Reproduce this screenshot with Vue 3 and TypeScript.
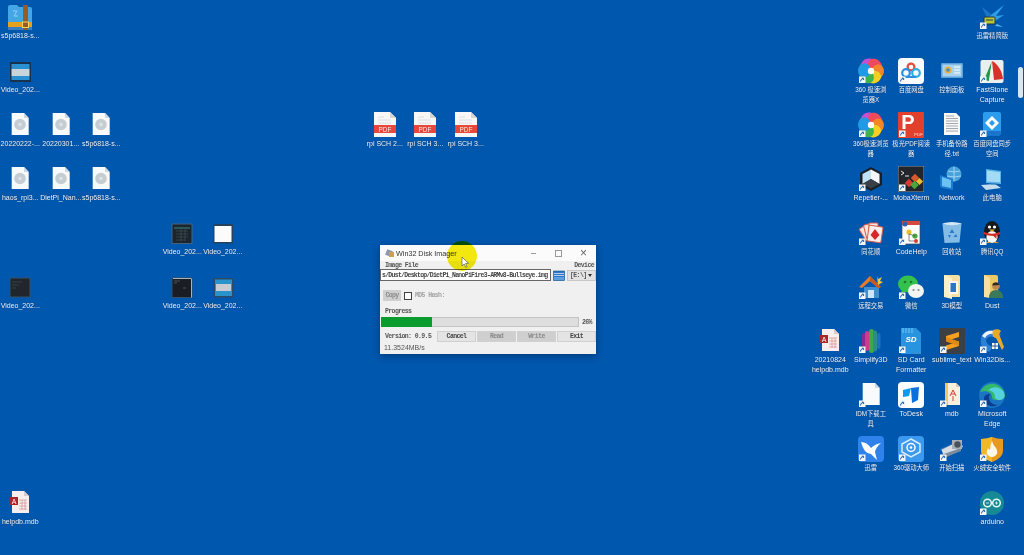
<script setup lang="ts">
interface DesktopIcon {
  col: number
  row: number
  kind: string
  label: string
  link?: boolean
}

const icons: DesktopIcon[] = [
  { col: 1, row: 1, kind: 'zip', label: 's5p6818-s...' },
  { col: 1, row: 2, kind: 'vstrip', label: 'Video_202...' },
  { col: 1, row: 3, kind: 'file', label: '20220222-...' },
  { col: 2, row: 3, kind: 'file', label: '20220301...' },
  { col: 3, row: 3, kind: 'file', label: 's5p6818-s...' },
  { col: 1, row: 4, kind: 'file', label: 'haos_rpi3...' },
  { col: 2, row: 4, kind: 'file', label: 'DietPi_Nan...' },
  { col: 3, row: 4, kind: 'file', label: 's5p6818-s...' },
  { col: 5, row: 5, kind: 'vgrid', label: 'Video_202...' },
  { col: 6, row: 5, kind: 'vwhite', label: 'Video_202...' },
  { col: 1, row: 6, kind: 'vdark', label: 'Video_202...' },
  { col: 5, row: 6, kind: 'vterm', label: 'Video_202...' },
  { col: 6, row: 6, kind: 'vblue', label: 'Video_202...' },
  { col: 10, row: 3, kind: 'pdf', label: 'rpi SCH 2...' },
  { col: 11, row: 3, kind: 'pdf', label: 'rpi SCH 3...' },
  { col: 12, row: 3, kind: 'pdf', label: 'rpi SCH 3...' },
  { col: 1, row: 10, kind: 'access', label: 'helpdb.mdb' },

  { col: 25, row: 1, kind: 'bird', label: '迅雷精简版', link: true },
  { col: 22, row: 2, kind: 'rainbow', label: '360 极速浏\n览器X', link: true },
  { col: 23, row: 2, kind: 'baidu', label: '百度网盘', link: true },
  { col: 24, row: 2, kind: 'panel', label: '控制面板' },
  { col: 25, row: 2, kind: 'faststone', label: 'FastStone\nCapture', link: true },
  { col: 22, row: 3, kind: 'rainbow', label: '360极速浏览\n器', link: true },
  { col: 23, row: 3, kind: 'foxit', label: '极光PDF阅读\n器', link: true },
  { col: 24, row: 3, kind: 'txt', label: '手机备份路\n径.txt' },
  { col: 25, row: 3, kind: 'sync', label: '百度网盘同步\n空间', link: true },
  { col: 22, row: 4, kind: 'repetier', label: 'Repetier-...', link: true },
  { col: 23, row: 4, kind: 'moba', label: 'MobaXterm', link: true },
  { col: 24, row: 4, kind: 'network', label: 'Network' },
  { col: 25, row: 4, kind: 'pc', label: '此电脑' },
  { col: 22, row: 5, kind: 'cards', label: '同花顺', link: true },
  { col: 23, row: 5, kind: 'codehelp', label: 'CodeHelp', link: true },
  { col: 24, row: 5, kind: 'recycle', label: '回收站' },
  { col: 25, row: 5, kind: 'qq', label: '腾讯QQ', link: true },
  { col: 22, row: 6, kind: 'house', label: '远程交易', link: true },
  { col: 23, row: 6, kind: 'wechat', label: '微信', link: true },
  { col: 24, row: 6, kind: 'folder3d', label: '3D模型' },
  { col: 25, row: 6, kind: 'userfolder', label: 'Dust' },
  { col: 21, row: 7, kind: 'access', label: '20210824\nhelpdb.mdb' },
  { col: 22, row: 7, kind: 'simplify', label: 'Simplify3D', link: true },
  { col: 23, row: 7, kind: 'sd', label: 'SD Card\nFormatter', link: true },
  { col: 24, row: 7, kind: 'sublime', label: 'sublime_text', link: true },
  { col: 25, row: 7, kind: 'disk', label: 'Win32Dis...', link: true },
  { col: 22, row: 8, kind: 'blank', label: 'IDM下载工\n具', link: true },
  { col: 23, row: 8, kind: 'todesk', label: 'ToDesk', link: true },
  { col: 24, row: 8, kind: 'mdb', label: 'mdb', link: true },
  { col: 25, row: 8, kind: 'edge', label: 'Microsoft\nEdge', link: true },
  { col: 22, row: 9, kind: 'xunlei', label: '迅雷', link: true },
  { col: 23, row: 9, kind: 'driver', label: '360驱动大师', link: true },
  { col: 24, row: 9, kind: 'scanner', label: '开始扫描', link: true },
  { col: 25, row: 9, kind: 'huorong', label: '火绒安全软件', link: true },
  { col: 25, row: 10, kind: 'arduino', label: 'arduino', link: true },
]

// petals of the 360 browser logo, clockwise from the top left
const petals = ['#c94fd0', '#ef4a5c', '#f4862a', '#f6cf22', '#3cb54a', '#1f9be6']

const hasCjk = (text: string) => /[\u4e00-\u9fff]/.test(text)

const imagePath = 's/Dust/Desktop/DietPi_NanoPiFire3-ARMv8-Bullseye.img'
const progress = 26
</script>

<template>
  <div class="desktop">
    <div class="grid">
      <div
        v-for="d in icons"
        :key="`${d.col}-${d.row}`"
        class="item"
        :style="{ gridColumn: d.col, gridRow: d.row }"
      >
        <svg class="art" viewBox="0 0 26 26" width="26" height="26">
          <g v-if="d.kind === 'zip'">
            <path d="M1 3q0-2 2-2h7l2 2h11q2 0 2 2v19q0 2-2 2H3q-2 0-2-2z" fill="#45a6e6" />
            <rect x="1" y="18" width="24" height="5" fill="#e6a21e" />
            <rect x="1" y="23" width="24" height="3" fill="#3b7fc0" />
            <rect x="16" y="1" width="5" height="25" fill="#9a5a24" />
            <rect x="15.5" y="18" width="6" height="5.5" fill="none" stroke="#f6d66a" />
            <path d="M6 7l4 0-3 5h4" fill="none" stroke="#8fd0f5" />
          </g>
          <g v-else-if="d.kind === 'vstrip'">
            <rect x="3" y="4" width="21" height="20" fill="#18324e" />
            <rect x="4.5" y="6" width="18" height="5" fill="#2b90d2" />
            <rect x="4.5" y="11" width="18" height="7" fill="#c9d3da" />
            <rect x="4.5" y="18" width="18" height="4" fill="#2b90d2" />
          </g>
          <g v-else-if="d.kind === 'file' || d.kind === 'blank'">
            <path d="M4.7 1H17l4.7 5v17H4.7z" fill="#f8fafc" />
            <path d="M17 1v5h4.7z" fill="#cfd8e2" />
            <g v-if="d.kind === 'file'">
              <circle cx="13" cy="12.5" r="5.8" fill="#c6cdd2" />
              <circle cx="13" cy="12.5" r="1.8" fill="#dde2e5" />
            </g>
          </g>
          <g v-else-if="d.kind === 'pdf'">
            <path d="M2 0H18l6 6V25H2z" fill="#f7f7f7" />
            <path d="M18 0v6h6z" fill="#d5d5d5" />
            <path d="M6 5h6M6 8h13M6 11h13" stroke="#dedede" />
            <rect x="2" y="13" width="22" height="8" fill="#e7483a" />
            <text x="13" y="19.6" class="t" font-size="6.4" fill="#fbe8e4" text-anchor="middle">PDF</text>
          </g>
          <g v-else-if="d.kind === 'vgrid'">
            <rect x="3" y="4" width="20" height="19.5" fill="#1c252c" stroke="#47627c" />
            <path d="M5 8h16" stroke="#3c8b86" />
            <path d="M7 11h12M7 14h12M7 17h12M7 20h9M12 9v12M16 9v12" stroke="#46535c" stroke-width=".6" />
          </g>
          <g v-else-if="d.kind === 'vwhite'">
            <rect x="3" y="4" width="20" height="19.5" fill="#27425c" />
            <rect x="4.5" y="6" width="17" height="16" fill="#fbfbfb" />
          </g>
          <g v-else-if="d.kind === 'vterm'">
            <rect x="3" y="4" width="20" height="19.5" fill="#1a1e24" stroke="#35506c" />
            <path d="M22.5 4.5v19M4 4.5h18" stroke="#e6e8ea" stroke-width=".7" />
            <path d="M5 7h6M5 9h3M14 14h3" stroke="#6c7480" stroke-width=".6" />
          </g>
          <g v-else-if="d.kind === 'vblue'">
            <rect x="3" y="4" width="20" height="19.5" fill="#2a4a68" />
            <rect x="5" y="5.5" width="17" height="16.5" fill="#2a93cc" />
            <rect x="6" y="10" width="15" height="7" fill="#c9ccd0" />
          </g>
          <g v-else-if="d.kind === 'vdark'">
            <rect x="3" y="4" width="20" height="19" fill="#20262c" stroke="#35506c" />
            <path d="M5 8h10M5 11h7M5 14h4" stroke="#48505a" stroke-width=".6" />
          </g>
          <g v-else-if="d.kind === 'access'">
            <path d="M5 1H17l5 5V23H5z" fill="#f9eeee" />
            <path d="M17 1v5h5z" fill="#d9c9c9" />
            <path d="M12 10h8M12 13h8M12 16h8M12 19h8M15 10v10M18 10v10" stroke="#cf8c8c" stroke-width=".7" />
            <rect x="3" y="7" width="8" height="8" fill="#a8262a" />
            <text x="7" y="13.8" class="t" font-size="7" fill="#fff" text-anchor="middle">A</text>
          </g>
          <g v-else-if="d.kind === 'mdb'">
            <path d="M6 1H17l4 4V23H6z" fill="#f9f1de" />
            <path d="M6 1h3v22H6z" fill="#efc765" />
            <path d="M17 1v4h4z" fill="#d9cdb4" />
            <path d="M11 14l3-6 3 6M12 12h4M14 14v5" fill="none" stroke="#c9423c" />
          </g>
          <g v-else-if="d.kind === 'bird'">
            <path d="M8 14L25 1 17 12l8-1-9 6z" fill="#2f9de6" />
            <path d="M8 14L3 3l9 7z" fill="#1c75c4" />
            <path d="M18 20l6 3-8-1z" fill="#58b7ee" />
            <rect x="5" y="13" width="11" height="7" rx="1" fill="#b8c83a" stroke="#27343a" />
            <path d="M7 16h7" stroke="#27343a" />
          </g>
          <g v-else-if="d.kind === 'rainbow'">
            <circle cx="13" cy="13" r="12" fill="#e8843a" />
            <path
              v-for="(color, i) in petals"
              :key="color"
              d="M13 13C5 15 0 8 5 3c4-4 12-3 12 3 0 3-2 5-4 7z"
              :fill="color"
              :transform="`rotate(${i * 60} 13 13)`"
            />
            <circle cx="13" cy="13" r="3.2" fill="#fff" />
          </g>
          <g v-else-if="d.kind === 'baidu'">
            <rect width="26" height="26" rx="4" fill="#f8fbff" />
            <circle cx="13" cy="9" r="3.4" fill="none" stroke="#e64a3a" stroke-width="2.2" />
            <circle cx="8" cy="15" r="3.8" fill="none" stroke="#2b90e0" stroke-width="2.2" />
            <circle cx="18" cy="15" r="3.8" fill="none" stroke="#2bb0e6" stroke-width="2.2" />
            <path d="M8 19h10" stroke="#2b90e0" stroke-width="2" />
          </g>
          <g v-else-if="d.kind === 'panel'">
            <rect x="2" y="5" width="22" height="15" rx="1" fill="#5aa2d8" />
            <rect x="3.5" y="6.5" width="19" height="12" fill="#a9d2ee" />
            <circle cx="9" cy="12" r="3.6" fill="#e8b23a" />
            <circle cx="9" cy="12" r="1.8" fill="#3f8fd0" />
            <path d="M15 9h6M15 12h6M15 15h6" stroke="#fff" />
          </g>
          <g v-else-if="d.kind === 'faststone'">
            <rect x="1.5" y="2" width="23" height="23" rx="2" fill="#e9eeee" />
            <path d="M13 3L5 22l5 1z" fill="#1f9a46" />
            <path d="M13 3l-3 20 5-1z" fill="#f3f3ee" />
            <path d="M13 3l2 19 9-1c-1-8-5-15-11-18z" fill="#d8312a" />
          </g>
          <g v-else-if="d.kind === 'foxit'">
            <rect width="26" height="26" rx="1" fill="#e0402c" />
            <text x="10" y="17" class="t" font-size="20" font-weight="700" fill="#fff" text-anchor="middle">P</text>
            <text x="20.5" y="23.5" class="t" font-size="4.4" fill="#ffd9d0" text-anchor="middle">PDF</text>
          </g>
          <g v-else-if="d.kind === 'txt'">
            <path d="M5 1H17l4 4V23H5z" fill="#f8f8f8" />
            <path d="M7 4h8M7 6.5h12M7 9h12M7 11.5h12M7 14h12M7 16.5h12M7 19h12" stroke="#8d939a" stroke-width=".8" />
          </g>
          <g v-else-if="d.kind === 'sync'">
            <path d="M6 0h14a2 2 0 0 1 2 2V20q0 4-4 4H8q-4 0-4-4V2a2 2 0 0 1 2-2z" fill="#2c9cec" />
            <path d="M4 19q0 5 4 5h10q4 0 4-5z" fill="#1a74cc" />
            <path d="M13 4l7 7-7 7-7-7z" fill="#fff" />
            <path d="M13 8l3 3-3 3-3-3z" fill="#2c9cec" />
          </g>
          <g v-else-if="d.kind === 'repetier'">
            <path d="M13 1l11 6v12l-11 6-11-6V7z" fill="#1b1f26" />
            <path d="M13 3.5l8.5 4.5v10l-8.5-5z" fill="#f4f6f8" />
            <path d="M13 3.5L4.5 8v10l8.5-5z" fill="#bfe2f4" />
            <path d="M4.5 18L13 13l8.5 5L13 22.5z" fill="#3a3f48" />
          </g>
          <g v-else-if="d.kind === 'moba'">
            <rect width="26" height="26" fill="#22262c" stroke="#8a9aa8" />
            <path d="M3 5l3 2-3 2M7 10h4" stroke="#e6e6e6" fill="none" />
            <rect x="8" y="14" width="6" height="6" fill="#d83a30" transform="rotate(45 11 17)" />
            <rect x="14" y="9" width="6" height="6" fill="#d85a2c" transform="rotate(45 17 12)" />
            <rect x="13.5" y="16" width="6" height="6" fill="#4aa63c" transform="rotate(45 16.5 19)" />
            <rect x="19" y="13" width="5" height="5" fill="#e8c030" transform="rotate(45 21.5 15.5)" />
          </g>
          <g v-else-if="d.kind === 'network'">
            <circle cx="15" cy="8" r="7.5" fill="#48a2dc" />
            <path d="M9 5q6 2 12 0M8 10q7 2 14 0M15 .5v15" stroke="#c7e6f6" stroke-width=".7" fill="none" />
            <path d="M1 9l13 4v11l-11-2q-2-1-2-2z" fill="#1c7dd0" />
            <path d="M3 11l9 3v8l-9-2z" fill="#6cc2f0" />
          </g>
          <g v-else-if="d.kind === 'pc'">
            <path d="M7 3l15 2v13L7 17z" fill="#5cb3e6" />
            <path d="M8 4.5l13 1.8v10L8 15.5z" fill="#a3daf4" />
            <path d="M2 19l14-1 6 4-15 2z" fill="#c5dcec" />
            <path d="M12 17l5 .7v1l-5-.2z" fill="#3282c4" />
          </g>
          <g v-else-if="d.kind === 'cards'">
            <rect x="4" y="6" width="8" height="14" rx="1" fill="#f6e4e0" stroke="#d65a50" transform="rotate(-32 8 13)" />
            <rect x="7" y="4" width="8" height="14" rx="1" fill="#f6e4e0" stroke="#d65a50" transform="rotate(-14 11 11)" />
            <rect x="11" y="3" width="9" height="15" rx="1" fill="#f6e4e0" stroke="#d65a50" />
            <rect x="10" y="6" width="14" height="16" rx="1" fill="#f5efec" stroke="#d65a50" transform="rotate(8 17 14)" />
            <path d="M17 9l4.5 6-4.5 5-4.5-5z" fill="#d8252a" />
          </g>
          <g v-else-if="d.kind === 'codehelp'">
            <rect x="4" y="1" width="18" height="23" fill="#fdfdfd" stroke="#444a52" stroke-width=".7" />
            <rect x="4" y="1" width="18" height="4" fill="#d64a3c" />
            <circle cx="7" cy="4" r="2.5" fill="#2b60b0" />
            <circle cx="11" cy="12" r="2.6" fill="#e8c22c" />
            <circle cx="17" cy="16" r="2.6" fill="#48a83e" />
            <circle cx="18" cy="21" r="2" fill="#d83a30" />
            <path d="M11 14l6 2M11 14v7h5" stroke="#555" fill="none" stroke-width=".7" />
          </g>
          <g v-else-if="d.kind === 'recycle'">
            <path d="M3.5 4l19-.5-2 19-15 .5z" fill="#84bce6" />
            <path d="M3 3.5Q13 .5 23 3.5 13 7 3 3.5z" fill="#d4e6f2" />
            <path d="M13 9l2.500 4h-5zM9 15h3l-1.500 3zM17 14l1.500 3h-4z" fill="#2a7cc8" />
          </g>
          <g v-else-if="d.kind === 'qq'">
            <ellipse cx="13" cy="12" rx="8" ry="11" fill="#17181b" />
            <ellipse cx="13" cy="17" rx="5.6" ry="6" fill="#f7f7f7" />
            <circle cx="10.5" cy="7" r="1.6" fill="#fff" />
            <circle cx="15.5" cy="7" r="1.6" fill="#fff" />
            <path d="M10 9.5h6l-3 2.2z" fill="#f0b020" />
            <path d="M5 12q8 3.5 16 0l.5 2-4 1.5V19l-3-3q-5 0-10-2z" fill="#d82a24" />
            <path d="M6 23q3-2 6 0zM14 23q3-2 6 0z" fill="#f0a820" />
          </g>
          <g v-else-if="d.kind === 'house'">
            <path d="M6 13h15v11H6z" fill="#3e8ed0" />
            <path d="M10 16h6v8h-6z" fill="#cfe6f6" />
            <path d="M1 13L12 2l11 11-3 1-8-7-8 7z" fill="#e87a2c" />
            <path d="M12 2l11 11-3 1-8-7z" fill="#c85a1c" />
            <path d="M19 2l1 3 4-2-2 4 3 1-5 3z" fill="#f0c840" />
          </g>
          <g v-else-if="d.kind === 'wechat'">
            <ellipse cx="10" cy="10" rx="10" ry="8.5" fill="#34c14c" />
            <path d="M4 15l-1 5 5-3z" fill="#34c14c" />
            <circle cx="7" cy="8" r="1.3" fill="#1d7a2e" />
            <circle cx="13" cy="8" r="1.3" fill="#1d7a2e" />
            <ellipse cx="18" cy="17" rx="8" ry="7" fill="#f2f4f2" />
            <circle cx="15.5" cy="16" r="1.1" fill="#8a8f8a" />
            <circle cx="20.5" cy="16" r="1.1" fill="#8a8f8a" />
          </g>
          <g v-else-if="d.kind === 'folder3d'">
            <path d="M5 1h14q2 0 2 2v20H5z" fill="#f4e0a0" />
            <path d="M5 1l8 3v21l-8-2z" fill="#fbf0c8" />
            <rect x="10" y="7" width="9" height="13" fill="#f8f8f8" />
            <rect x="11.5" y="9" width="5.5" height="9" fill="#2878c8" />
          </g>
          <g v-else-if="d.kind === 'userfolder'">
            <path d="M5 1h12q2 0 2 2v20H5z" fill="#f0c860" />
            <path d="M5 1l6 3v20l-6-1z" fill="#f8e0a0" />
            <circle cx="17" cy="12" r="3.8" fill="#b88858" />
            <path d="M17 8.5q-4 0-3.5 3l7-.5q0-2.5-3.5-2.5z" fill="#2a2a2a" />
            <path d="M10 24q0-8 7-8t7 8z" fill="#3a7a5a" />
          </g>
          <g v-else-if="d.kind === 'simplify'">
            <rect x="4" y="5" width="4" height="16" rx="2" fill="#8a2a8c" />
            <rect x="7" y="3" width="4" height="20" rx="2" fill="#d03a8a" />
            <rect x="11" y="1" width="5" height="24" rx="2.5" fill="#3fa64a" />
            <rect x="15" y="2.5" width="4" height="21" rx="2" fill="#2a8c8c" />
            <rect x="19" y="5" width="3.5" height="16" rx="1.7" fill="#1f6fc0" />
          </g>
          <g v-else-if="d.kind === 'sd'">
            <path d="M3 0h15l5 5v21H3z" fill="#2894e0" />
            <path d="M5 0v5M8 0v5M11 0v5M14 0v5" stroke="#7cc4f2" />
            <text x="13" y="14" class="t" font-size="8" font-style="italic" font-weight="700" fill="#fff" text-anchor="middle">SD</text>
          </g>
          <g v-else-if="d.kind === 'sublime'">
            <rect width="26" height="26" rx="1" fill="#3c3f44" />
            <path d="M20 4L7 8v5l13-4zM20 13.5L7 17.500V22l13-4z" fill="#f7a01e" />
            <path d="M7 9l13 4.500V18L7 13.500z" fill="#e08a14" />
          </g>
          <g v-else-if="d.kind === 'disk'">
            <path d="M2 10Q4 2 13 2q6 0 9 5l-5 3q-7-4-10 2 0 5 7 7l-4 5Q0 20 2 10z" fill="#2f7fd4" />
            <path d="M3 8q4-6 11-5l1 3Q9 5 6 10z" fill="#eef5fb" />
            <path d="M14 2q6-2 8 1l-2 3 5 13-2 3-6-12q-5-1-3-8z" fill="#e8a828" />
            <rect x="13" y="15" width="6" height="6" fill="#f4f6f8" />
            <path d="M16 15v6M13 18h6" stroke="#1a3a6a" stroke-width=".8" />
          </g>
          <g v-else-if="d.kind === 'todesk'">
            <rect width="26" height="26" rx="4" fill="#fbfdff" />
            <path d="M5 8l8-2-2 8-6 1z" fill="#0f9bec" />
            <path d="M13 6l8-1-1 13-6 3z" fill="#0b6fe0" />
          </g>
          <g v-else-if="d.kind === 'edge'">
            <circle cx="13" cy="13" r="13" fill="#1b74c4" />
            <path d="M1 10a13 13 0 0 1 25 3c0 4-4 5-8 5s-5-1-5-3c0-5-6-7-12-5z" fill="#32b96a" />
            <path d="M9 8q8-6 15 1c2 3 2 6 0 8-3 2-6 1-8-1 0-5-2-7-7-8z" fill="#55d2e0" />
            <path d="M5 17c0-4 3-5 6-5-2 3-1 8 3 10 2 1 4 1 5 .5-5 4-14 1-14-5.5z" fill="#0c3e8e" />
          </g>
          <g v-else-if="d.kind === 'xunlei'">
            <rect width="26" height="26" rx="4" fill="#2f82ec" />
            <path d="M3 6q6 0 10 6 4-4 10-5-5 4-6 9l2 8-6-6q-7 0-10-12z" fill="#fff" />
          </g>
          <g v-else-if="d.kind === 'driver'">
            <rect width="26" height="26" rx="4" fill="#3b9af0" />
            <path d="M13 3l9 5v8l-9 5-9-5V8z" fill="none" stroke="#d8ecfc" stroke-width="1.5" />
            <circle cx="13" cy="11.5" r="4" fill="none" stroke="#fff" stroke-width="1.5" />
            <circle cx="13" cy="11.5" r="1.3" fill="#fff" />
          </g>
          <g v-else-if="d.kind === 'scanner'">
            <path d="M2 13l19-8 3 6-19 9z" fill="#d7dde2" />
            <path d="M2 19l20-7v3L5 22z" fill="#7d8c9c" />
            <rect x="13" y="4" width="10" height="9" fill="#a8b0b6" />
            <circle cx="18.5" cy="8.5" r="3.2" fill="#48525c" />
            <path d="M1 14l12-6" stroke="#2b6cb0" />
          </g>
          <g v-else-if="d.kind === 'huorong'">
            <path d="M2 3q6 0 11-2 5 2 11 2v12q0 7-11 11Q2 22 2 15z" fill="#e89a1e" />
            <path d="M2 3q6 0 11-2v25Q2 22 2 15z" fill="#f2b82a" />
            <path d="M13 5q1 4 4 7 3 5-1 8-3 2-6 0-4-3-1-8 1 2 2 2 0-5 2-9z" fill="#fdf6ea" />
          </g>
          <g v-else-if="d.kind === 'arduino'">
            <circle cx="13" cy="13" r="12" fill="#168a94" />
            <circle cx="8.5" cy="13" r="3.8" fill="none" stroke="#e9f6f6" stroke-width="1.5" />
            <circle cx="17.5" cy="13" r="3.8" fill="none" stroke="#e9f6f6" stroke-width="1.5" />
            <path d="M7 13h3M16 13h3M17.5 11.5v3" stroke="#e9f6f6" stroke-width=".8" />
          </g>
          <g v-if="d.link">
            <rect x="1" y="18.5" width="6.5" height="6.5" fill="#f4f6f8" />
            <path d="M2.5 23.500q0-2.500 2.500-3M3.800 20.200h1.800V22" fill="none" stroke="#1a5fb0" />
          </g>
        </svg>
        <span class="label" :class="{ cjk: hasCjk(d.label) }">{{ d.label }}</span>
      </div>
    </div>

    <div class="scrollbar"></div>

    <div class="window">
      <div class="titlebar">
        <svg class="app-icon" viewBox="0 0 10 10" width="10" height="10">
          <rect x="1" y="2" width="6" height="6" fill="#8a9aa8" transform="rotate(20 4 5)" />
          <rect x="4" y="4" width="5" height="5" fill="#c9a24a" />
        </svg>
        <span class="title">Win32 Disk Imager</span>
        <span class="spacer"></span>
        <span class="ctl">–</span>
        <span class="ctl"><i class="max"></i></span>
        <span class="ctl close">×</span>
      </div>
      <div class="labels">
        <span>Image File</span>
        <span>Device</span>
      </div>
      <div class="path-row">
        <div class="path-input">{{ imagePath }}</div>
        <svg class="open" viewBox="0 0 12 11" width="12" height="11">
          <rect x=".5" y="1" width="11" height="9.5" fill="#2b78c8" stroke="#14508c" stroke-width=".6" />
          <path d="M1 3.5h10M1 5.5h10" stroke="#d5e6f5" stroke-width=".8" />
          <rect x="1" y="7" width="10" height="3" fill="#5aa0e0" />
        </svg>
        <div class="device"><span>[E:\]</span><i class="arrow"></i></div>
      </div>
      <div class="hash-row">
        <span class="btn off copy">Copy</span>
        <i class="check"></i>
        <span class="muted">MD5 Hash:</span>
      </div>
      <div class="progress-label">Progress</div>
      <div class="progress-row">
        <div class="bar"><div class="fill" :style="{ width: progress + '%' }"></div></div>
        <span class="pct">{{ progress }}%</span>
      </div>
      <div class="actions">
        <span class="version">Version: 0.9.5</span>
        <span class="btn">Cancel</span>
        <span class="btn off">Read</span>
        <span class="btn off">Write</span>
        <span class="btn">Exit</span>
      </div>
      <div class="status">11.3524MB/s</div>
    </div>

    <div class="highlight"></div>
    <svg class="pointer" viewBox="0 0 8 12" width="8" height="12">
      <path d="M1 1v9l2.2-2 1.5 3.300 1.400-.6L4.600 7.400H7.500z" fill="#fff" stroke="#5a5f50" stroke-width=".7" />
    </svg>
  </div>
</template>

<style scoped>
.desktop {
  position: relative;
  width: 1024px;
  height: 555px;
  overflow: hidden;
  background: #0058ae;
  font-family: 'Liberation Sans', 'Noto Sans CJK SC', sans-serif;
  filter: blur(0.45px);
}

.grid {
  display: grid;
  grid-template-columns: repeat(25, 40.5px);
  grid-template-rows: repeat(10, 54px);
  padding-top: 4px;
}

.item {
  display: flex;
  flex-direction: column;
  align-items: center;
}

.art {
  display: block;
  flex: none;
}

.t {
  font-family: 'Liberation Sans', sans-serif;
}

.label {
  margin-top: 1px;
  color: #f2f6fb;
  font-size: 7px;
  line-height: 9.5px;
  text-align: center;
  white-space: pre;
  text-shadow: 0 0 1px rgba(0, 30, 80, 0.7);
}

.label.cjk {
  font-size: 6.3px;
}

.scrollbar {
  position: absolute;
  right: 1px;
  top: 67px;
  width: 5px;
  height: 31px;
  border-radius: 3px;
  background: #d9e6f2;
}

.window {
  position: absolute;
  left: 380px;
  top: 245px;
  width: 216px;
  height: 109px;
  display: flex;
  flex-direction: column;
  background: #f0f0f0;
  box-shadow: 0 2px 8px rgba(0, 20, 60, 0.45);
  font-family: 'Liberation Mono', monospace;
  font-size: 6.5px;
  font-weight: 700;
  letter-spacing: -0.6px;
  color: #555;
}

.titlebar {
  display: flex;
  align-items: center;
  height: 16px;
  padding-left: 5px;
  background: #fbfbfb;
  color: #333;
}

.app-icon {
  margin-right: 1px;
}

.title {
  font-family: 'Liberation Sans', sans-serif;
  font-size: 7.2px;
  font-weight: 400;
  letter-spacing: 0;
}

.spacer {
  flex: 1;
}

.ctl {
  display: flex;
  align-items: center;
  justify-content: center;
  width: 25px;
  font-family: 'Liberation Sans', sans-serif;
  font-size: 9px;
  font-weight: 400;
  letter-spacing: 0;
  color: #666;
}

.close {
  font-size: 12px;
}

.max {
  display: block;
  width: 5px;
  height: 5px;
  border: 1px solid #999;
}

.labels {
  display: flex;
  justify-content: space-between;
  align-items: center;
  height: 8px;
  padding: 0 2px 0 5px;
}

.path-row {
  display: flex;
  align-items: center;
  height: 12px;
}

.path-input {
  width: 171px;
  height: 12px;
  padding-left: 1px;
  box-sizing: border-box;
  overflow: hidden;
  line-height: 11px;
  letter-spacing: -0.72px;
  white-space: nowrap;
  background: #fff;
  border: 1px solid #666;
  color: #444;
}

.open {
  margin: 0 2px;
}

.device {
  display: flex;
  flex: 1;
  align-items: center;
  justify-content: space-between;
  height: 11px;
  padding: 0 3px 0 2px;
  background: #e2e2e2;
  border: 1px solid #c8c8c8;
  box-sizing: border-box;
}

.arrow {
  border-left: 2.5px solid transparent;
  border-right: 2.5px solid transparent;
  border-top: 3px solid #333;
}

.hash-row {
  display: flex;
  align-items: center;
  height: 11px;
  margin-top: 9px;
  padding-left: 3px;
}

.btn {
  display: flex;
  flex: none;
  align-items: center;
  justify-content: center;
  box-sizing: border-box;
  width: 39px;
  height: 11px;
  margin-left: 1px;
  background: #e4e4e4;
  border: 1px solid #d0d0d0;
  color: #444;
}

.btn.off {
  background: #cfcfcf;
  color: #8a8a8a;
}

.copy {
  width: 18px;
  margin-left: 0;
}

.check {
  width: 6px;
  height: 6px;
  margin: 0 3px 0 3px;
  background: #fff;
  border: 1px solid #444;
}

.muted {
  color: #a4a4a4;
}

.progress-label {
  height: 10px;
  margin-top: 6px;
  padding-left: 5px;
  line-height: 10px;
}

.progress-row {
  display: flex;
  align-items: center;
  height: 10px;
  padding-left: 1px;
}

.bar {
  flex: none;
  width: 198px;
  height: 10px;
  background: #dedede;
  box-shadow: inset 0 0 0 1px #c4c4c4;
}

.fill {
  height: 100%;
  background: #0a9c2c;
}

.pct {
  margin-left: 3px;
}

.actions {
  display: flex;
  align-items: center;
  height: 11px;
  margin-top: 4px;
}

.version {
  flex: 1;
  padding-left: 5px;
  white-space: nowrap;
}

.status {
  height: 12px;
  padding-left: 4px;
  line-height: 12px;
  font-family: 'Liberation Sans', sans-serif;
  font-size: 7px;
  font-weight: 400;
  letter-spacing: 0;
  color: #555;
}

.highlight {
  position: absolute;
  left: 447px;
  top: 241px;
  width: 30px;
  height: 30px;
  border-radius: 50%;
  background: #f6ec10;
  mix-blend-mode: multiply;
}

.pointer {
  position: absolute;
  left: 461px;
  top: 256px;
}
</style>

<style>
html,
body {
  margin: 0;
  background: #0058ae;
}
</style>
